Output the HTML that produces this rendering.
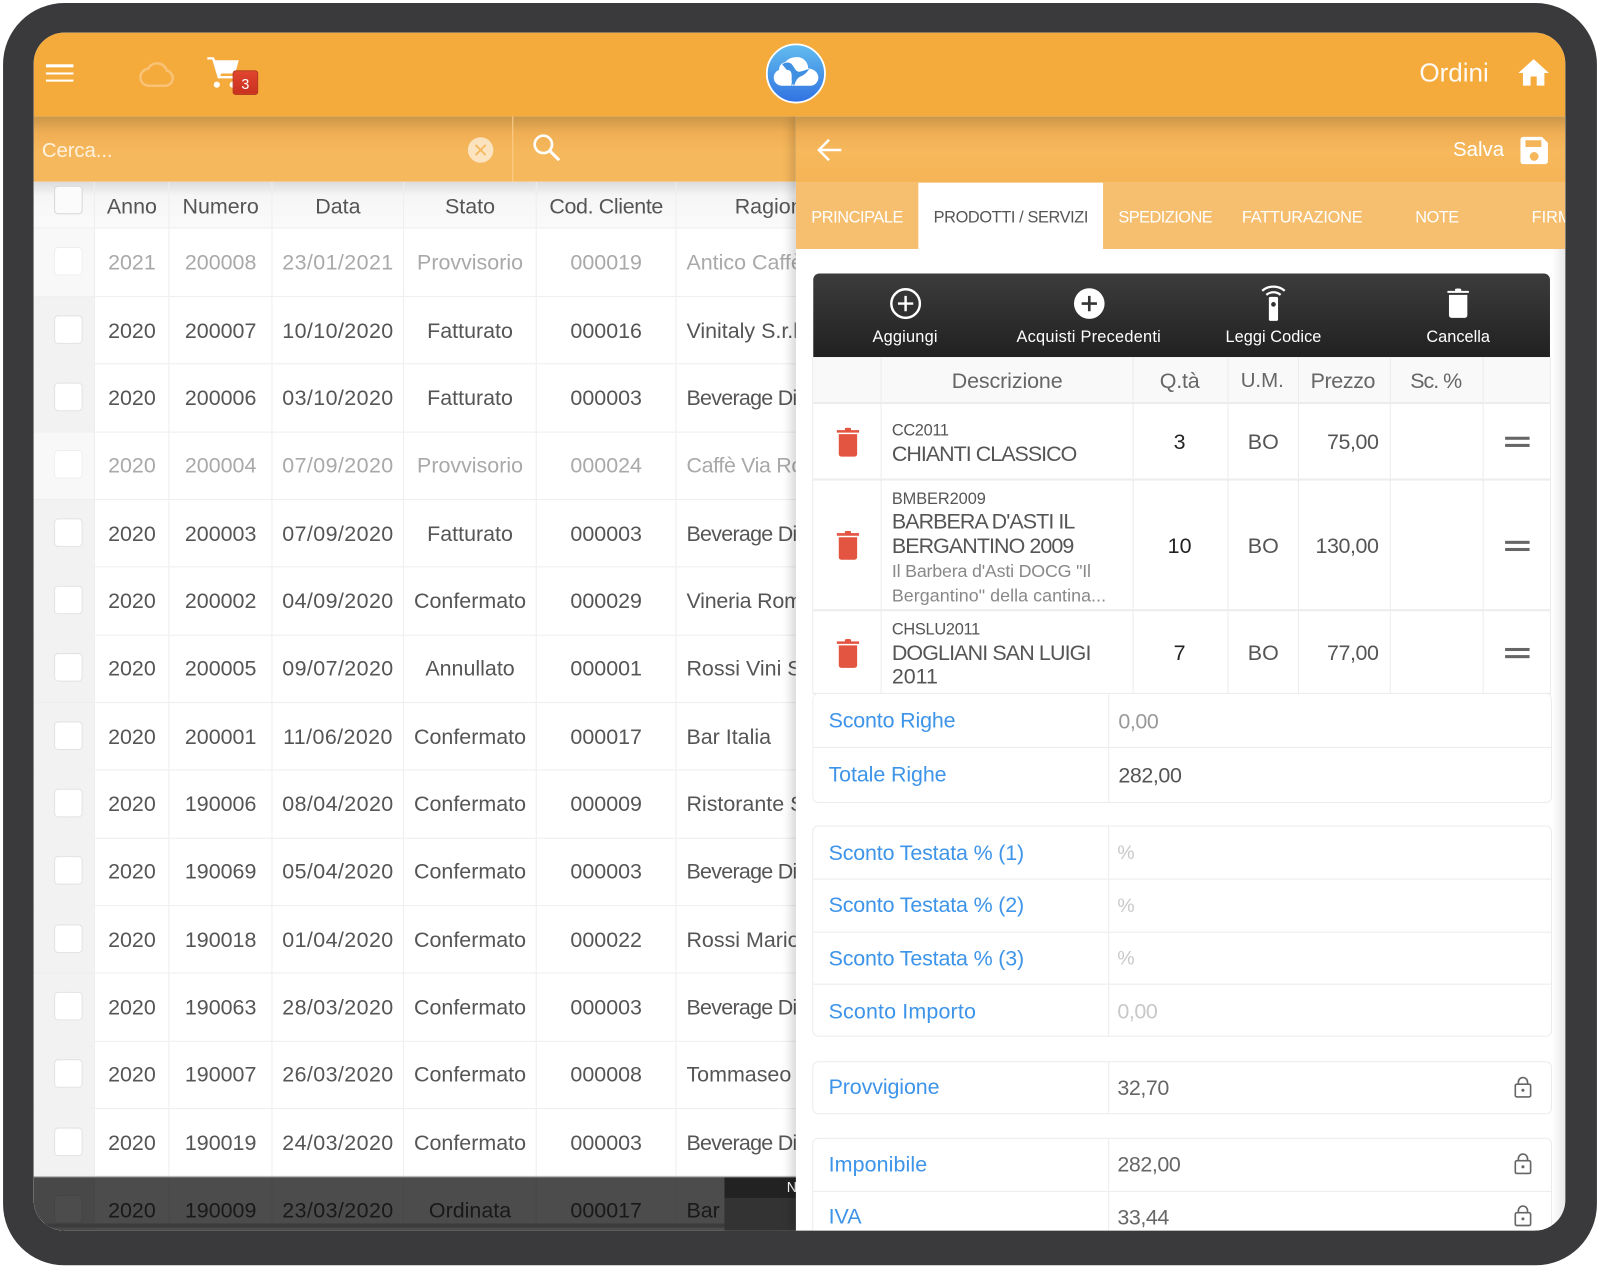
<!DOCTYPE html>
<html lang="it">
<head>
<meta charset="utf-8">
<title>Ordini</title>
<style>
html,body{margin:0;padding:0;width:1600px;height:1268px;overflow:hidden;background:#fff}
*{box-sizing:border-box}
#root{position:absolute;left:0;top:0;width:1568px;height:1243px;transform:scale(1.0204);transform-origin:0 0;font-family:"Liberation Sans",sans-serif;color:#555}
#frame{position:absolute;left:3px;top:3px;width:1562px;height:1236.5px;background:#3a3a3c;border-radius:60px}
#screen{position:absolute;left:33px;top:32px;width:1500.5px;height:1173.5px;border-radius:30px;overflow:hidden;background:#fff}
.a{position:absolute}
.t{position:absolute;white-space:nowrap}
svg{position:absolute;display:block}
#top{left:0;top:0;width:1501px;height:82px;background:#f5aa3c;z-index:5}
#search{left:0;top:82px;width:747px;height:64px;background:linear-gradient(#c99649 0,#f0ae54 16px,#f6b85c 34px,#f6b85c 100%)}
#left{left:0;top:146px;width:747px;height:1028px;overflow:hidden;background:#fff}
.r{display:flex;height:66.35px;border-bottom:1px solid #eee;font-size:21px;color:#555}
.r>div{display:flex;align-items:center;justify-content:center;border-right:1px solid #eee;white-space:nowrap;overflow:hidden;padding-top:2px}
.r>div:nth-child(1){width:60.3px;background:#f2f2f2;position:relative;padding:0 0 2px 8px}
.r>div:nth-child(2){width:73px}
.r>div:nth-child(3){width:101px}
.r>div:nth-child(4){width:129px;letter-spacing:.4px}
.r>div:nth-child(5){width:130px}
.r>div:nth-child(6){width:137px}
.r>div:nth-child(7){width:117px;justify-content:flex-start;padding-left:9.7px;border-right:0}
.r i{display:block;width:28px;height:28px;background:#fff;border:1px solid #e3e3e3;border-radius:4px}
.g{color:#a9a9a9}
.g>div:nth-child(1){background:#f8f8f8}
.g i{border-color:#efefef}
.h{height:46px;background:linear-gradient(#dcdcdc 0,#f6f6f6 14px,#fafafa 100%);color:#555}
.h>div{letter-spacing:0!important;padding-top:4px}
.h>div:nth-child(1){background:transparent}
.h i{position:absolute;left:20px;top:4px;background:#fbfbfb;border-color:#d8d8d8}
.bv{letter-spacing:-.7px}
.cv{letter-spacing:-.35px}
.vr{letter-spacing:-.2px}
#dim{left:0;top:1121px;width:747px;height:53px;background:rgba(0,0,0,.7);border-top:1px solid #888}
#panel{left:747px;top:82px;width:753.5px;height:1092px;background:#fff;box-shadow:-4px 0 10px rgba(0,0,0,.18);overflow:hidden}
#phead{left:0;top:0;width:754px;height:65px;background:linear-gradient(#c99649 0,#f0ae54 16px,#f6b85c 34px,#f5b456 100%)}
#tabs{left:0;top:65px;width:754px;height:65px;background:#f6bf6f;font-size:16px;color:#fff}
#act{left:120px;top:0;width:181px;height:65px;background:#fff}
#bar{left:17px;top:154px;width:722px;height:82px;border-radius:6px 6px 0 0;background:linear-gradient(#3c3c3c,#212121);color:#fff;font-size:16px}
.lb{width:180px;text-align:center;top:54px}
.line{position:absolute;background:#ececec}
.c{position:absolute;font-size:21px;white-space:nowrap;transform:translate(-50%,-50%)}
.l{position:absolute;white-space:nowrap;transform:translateY(-50%);left:94px}
.box{position:absolute;left:16px;width:725px;border:1px solid #ececec;border-radius:6px;overflow:hidden;background:#fff}
.rw{position:absolute;left:0;width:100%;height:52px;border-bottom:1px solid #ececec;font-size:21px}
.rw b{position:absolute;left:15px;top:13px;font-weight:400;color:#3d94e8;white-space:nowrap}
.rw span{position:absolute;left:298px;top:14px;color:#666;white-space:nowrap;letter-spacing:-.4px}
.rw em{position:absolute;left:289px;top:0;width:1px;height:100%;background:#ececec}
</style>
</head>
<body>
<div id="root">
<div id="frame"></div>
<div id="screen">

<div id="top" class="a">
  <div class="a" style="left:12px;top:31px;width:27px;height:2.6px;background:#fff"></div>
  <div class="a" style="left:12px;top:38.5px;width:27px;height:2.6px;background:#fff"></div>
  <div class="a" style="left:12px;top:45.5px;width:27px;height:2.6px;background:#fff"></div>
  <svg style="left:103px;top:27px" width="36" height="27" viewBox="0 0 36 27"><path d="M9 25h17a7.500 7.500 0 0 0 1.500-14.800A10 10 0 0 0 9 8.500 8.300 8.300 0 0 0 9 25z" fill="none" stroke="#fff" stroke-opacity=".3" stroke-width="2.400"/></svg>
  <svg style="left:170px;top:24px" width="32" height="31" viewBox="0 0 32 31"><path d="M0 0h6.500l1.500 3h23l-3.500 13H11.500l.8 2.500H27v2.300H10.500L5 2.300H0z" fill="#fff"/><path d="M10.500 15.500h3v2.500h-3z" fill="#fff"/><circle cx="9.500" cy="27" r="3" fill="#fff"/><circle cx="25" cy="27" r="3" fill="#fff"/></svg>
  <div class="a" style="left:195px;top:37px;width:25px;height:24px;background:linear-gradient(#e0452f,#c9301f);border:1px solid #b22c1c;border-radius:3px;color:#fff;font-size:14px;line-height:25px;text-align:center">3</div>
  <svg style="left:717px;top:10px" width="60" height="60" viewBox="0 0 60 60"><defs><linearGradient id="lg" x1="0" y1="0" x2="0" y2="1"><stop offset="0" stop-color="#62bdee"/><stop offset="1" stop-color="#3172e2"/></linearGradient></defs><circle cx="30" cy="30" r="28.500" fill="url(#lg)" stroke="#fff" stroke-width="1.800"/><path d="M16 42a8 8 0 0 1-2.500-15.500 7 7 0 0 1 6-7.500C22 15.500 27 13.500 32 14c6 .5 10 5.500 10 11 6 .5 10 4.500 10 9a8 8 0 0 1-8 8z" fill="#fff"/><path d="M16.500 21c3-2 6.500-2.500 9-.5 2.500 2.500 3 5.500 6 7.500 3 1 6-1 11.500-2.500-2 3.500-5 6-8.500 7.500-2.500 1.200-4 3-5.500 7l-1 2.500-.8-2.500-1.700 2.500.5-4.500c-.5-3 .3-5.500-.5-8.500-.7-2.300-2.500-3-4.500-3z" fill="#3f8fe2"/></svg>
  <div class="t" style="left:1358px;top:26px;font-size:25.500px;color:#fff;font-weight:400;opacity:.95">Ordini</div>
  <svg style="left:1455px;top:26px" width="30" height="26" viewBox="0 0 30 26"><path d="M15 0 0 13.500h4.500V26h7.500v-9h6v9h7.500V13.500H30z" fill="#fff"/></svg>
</div>

<div id="left" class="a">
  <div class="r h"><div><i></i></div><div>Anno</div><div>Numero</div><div>Data</div><div>Stato</div><div style="letter-spacing:-.35px!important">Cod. Cliente</div><div style="padding-left:57px">Ragione Sociale</div></div>
  <div class="r g" style="height:67px"><div><i></i></div><div>2021</div><div>200008</div><div>23/01/2021</div><div>Provvisorio</div><div>000019</div><div>Antico Caffè</div></div>
  <div class="r"><div><i></i></div><div>2020</div><div>200007</div><div>10/10/2020</div><div>Fatturato</div><div>000016</div><div>Vinitaly S.r.l.</div></div>
  <div class="r"><div><i></i></div><div>2020</div><div>200006</div><div>03/10/2020</div><div>Fatturato</div><div>000003</div><div class="bv">Beverage Di</div></div>
  <div class="r g"><div><i></i></div><div>2020</div><div>200004</div><div>07/09/2020</div><div>Provvisorio</div><div>000024</div><div class="cv">Caffè Via Ro</div></div>
  <div class="r"><div><i></i></div><div>2020</div><div>200003</div><div>07/09/2020</div><div>Fatturato</div><div>000003</div><div class="bv">Beverage Di</div></div>
  <div class="r"><div><i></i></div><div>2020</div><div>200002</div><div>04/09/2020</div><div>Confermato</div><div>000029</div><div class="vr">Vineria Rom</div></div>
  <div class="r"><div><i></i></div><div>2020</div><div>200005</div><div>09/07/2020</div><div>Annullato</div><div>000001</div><div>Rossi Vini S</div></div>
  <div class="r"><div><i></i></div><div>2020</div><div>200001</div><div>11/06/2020</div><div>Confermato</div><div>000017</div><div>Bar Italia</div></div>
  <div class="r"><div><i></i></div><div>2020</div><div>190006</div><div>08/04/2020</div><div>Confermato</div><div>000009</div><div>Ristorante S</div></div>
  <div class="r"><div><i></i></div><div>2020</div><div>190069</div><div>05/04/2020</div><div>Confermato</div><div>000003</div><div class="bv">Beverage Di</div></div>
  <div class="r"><div><i></i></div><div>2020</div><div>190018</div><div>01/04/2020</div><div>Confermato</div><div>000022</div><div>Rossi Mario</div></div>
  <div class="r"><div><i></i></div><div>2020</div><div>190063</div><div>28/03/2020</div><div>Confermato</div><div>000003</div><div class="bv">Beverage Di</div></div>
  <div class="r"><div><i></i></div><div>2020</div><div>190007</div><div>26/03/2020</div><div>Confermato</div><div>000008</div><div>Tommaseo</div></div>
  <div class="r"><div><i></i></div><div>2020</div><div>190019</div><div>24/03/2020</div><div>Confermato</div><div>000003</div><div class="bv">Beverage Di</div></div>
  <div class="r"><div><i></i></div><div>2020</div><div>190009</div><div>23/03/2020</div><div>Ordinata</div><div>000017</div><div>Bar</div></div>
</div>

<div id="search" class="a">
  <div class="t" style="left:8px;top:23px;font-size:20px;color:#fff;opacity:.8;letter-spacing:-.1px">Cerca...</div>
  <svg style="left:425px;top:20px" width="26" height="26" viewBox="0 0 26 26"><circle cx="13" cy="13" r="12.500" fill="#fff" fill-opacity=".62"/><path d="M8 8l10 10M18 8 8 18" stroke="#f6b85c" stroke-width="1.800"/></svg>
  <div class="a" style="left:469px;top:0;width:1px;height:64px;background:#fbd091"></div>
  <svg style="left:489px;top:17px" width="28" height="28" viewBox="0 0 28 28"><circle cx="10.500" cy="10.500" r="8.500" fill="none" stroke="#fff" stroke-width="2.600"/><path d="M16.500 16.500 26 26" stroke="#fff" stroke-width="3"/></svg>
</div>

<div id="dim" class="a">
  <div class="a" style="left:0;top:45px;width:677px;height:4px;background:#3c3c3c"></div>
  <div class="a" style="left:677px;top:0;width:70px;height:20px;background:#222;color:#fff;font-size:14px;line-height:18px;padding-left:61px">N</div>
  <div class="a" style="left:677px;top:20px;width:70px;height:33px;background:#333"></div>
</div>

<div id="panel" class="a">
  <div id="phead" class="a">
    <svg style="left:20px;top:20px" width="26" height="26" viewBox="0 0 26 26"><path d="M24.500 13H3M12.500 3 2.500 13l10 10" fill="none" stroke="#fff" stroke-width="2.400"/></svg>
    <div class="t" style="left:644px;top:22px;font-size:20px;color:#fff">Salva</div>
    <svg style="left:710px;top:20px" width="27" height="27" viewBox="0 0 27 27"><path d="M3 0h18l6 6v18a3 3 0 0 1-3 3H3a3 3 0 0 1-3-3V3a3 3 0 0 1 3-3zM5 3.500v6.500h15.500V3.500zM13.500 15a4.300 4.300 0 1 0 0 8.600 4.300 4.300 0 0 0 0-8.600z" fill="#fff" fill-rule="evenodd"/></svg>
  </div>
  <div id="tabs" class="a">
    <div id="act" class="a"></div>
    <div class="t" style="left:15px;top:26px;letter-spacing:-.4px">PRINCIPALE</div>
    <div class="t" style="left:135px;top:26px;color:#555;letter-spacing:-.37px">PRODOTTI / SERVIZI</div>
    <div class="t" style="left:316px;top:26px;letter-spacing:-.5px">SPEDIZIONE</div>
    <div class="t" style="left:437px;top:26px;letter-spacing:-.2px">FATTURAZIONE</div>
    <div class="t" style="left:607px;top:26px;letter-spacing:-.5px">NOTE</div>
    <div class="t" style="left:721px;top:26px">FIRMA</div>
  </div>

  <div id="bar" class="a">
    <svg style="left:75px;top:14px" width="31" height="31" viewBox="0 0 31 31"><circle cx="15.500" cy="15.500" r="14" fill="none" stroke="#fff" stroke-width="2.400"/><path d="M15.500 8v15M8 15.500h15" stroke="#fff" stroke-width="2.400"/></svg>
    <svg style="left:255px;top:14px" width="31" height="31" viewBox="0 0 31 31"><circle cx="15.500" cy="15.500" r="15" fill="#fff"/><path d="M15.500 8v15M8 15.500h15" stroke="#333" stroke-width="2.600"/></svg>
    <svg style="left:439px;top:11px" width="24" height="36" viewBox="0 0 24 36"><path d="M1 6C7 .5 17 .5 23 6M5 10c4-3.500 10-3.500 14 0" fill="none" stroke="#fff" stroke-width="2.200"/><path d="M7.500 13.500a1.500 1.500 0 0 1 1.500-1.500h6a1.500 1.500 0 0 1 1.500 1.500V34a1.500 1.500 0 0 1-1.500 1.500H9A1.500 1.500 0 0 1 7.500 34zM12 17a2.300 2.300 0 1 0 0 4.600 2.300 2.300 0 0 0 0-4.600z" fill="#fff" fill-rule="evenodd"/></svg>
    <svg style="left:621px;top:14px" width="22" height="30" viewBox="0 0 22 30"><path d="M8 1.500C8 .5 14 .5 14 1.500V3h7.500v2H.5V3H8z" fill="#fff"/><path d="M2 7h18v20a2.500 2.500 0 0 1-2.500 2.500h-13A2.500 2.500 0 0 1 2 27z" fill="#fff"/></svg>
    <div class="t lb" style="left:0;letter-spacing:.2px">Aggiungi</div>
    <div class="t lb" style="left:180px;letter-spacing:.25px">Acquisti Precedenti</div>
    <div class="t lb" style="left:361px;letter-spacing:.05px">Leggi Codice</div>
    <div class="t lb" style="left:542px">Cancella</div>
  </div>

  <!-- products table -->
  <div class="a" style="left:17px;top:236px;width:722px;height:45px;background:#f9f9f9"></div>
  <div class="line" style="left:17px;top:280px;width:723px;height:2px"></div>
  <div class="line" style="left:17px;top:355px;width:723px;height:2px"></div>
  <div class="line" style="left:17px;top:483px;width:723px;height:2px"></div>
  <div class="line" style="left:17px;top:565px;width:723px;height:2px"></div>
  <div class="line" style="left:16px;top:236px;width:1px;height:330px"></div>
  <div class="line" style="left:83px;top:236px;width:1px;height:330px"></div>
  <div class="line" style="left:330px;top:236px;width:1px;height:330px"></div>
  <div class="line" style="left:423px;top:236px;width:1px;height:330px"></div>
  <div class="line" style="left:492px;top:236px;width:1px;height:330px"></div>
  <div class="line" style="left:582px;top:236px;width:1px;height:330px"></div>
  <div class="line" style="left:673px;top:236px;width:1px;height:330px"></div>
  <div class="line" style="left:739px;top:236px;width:1px;height:330px"></div>

  <div class="c" style="left:207px;top:260px;color:#666;letter-spacing:-.1px">Descrizione</div>
  <div class="c" style="left:376px;top:260px;color:#666;letter-spacing:-.2px">Q.tà</div>
  <div class="c" style="left:457px;top:260px;color:#666;font-size:20px">U.M.</div>
  <div class="c" style="left:536px;top:260px;color:#666;letter-spacing:-.35px">Prezzo</div>
  <div class="c" style="left:627px;top:260px;color:#666;letter-spacing:-1px">Sc. %</div>

  <div class="l" style="top:309px;font-size:16px;letter-spacing:-.3px">CC2011</div>
  <div class="l" style="top:332px;font-size:21px;letter-spacing:-.95px">CHIANTI CLASSICO</div>
  <div class="l" style="top:376px;font-size:16px;letter-spacing:-.05px">BMBER2009</div>
  <div class="l" style="top:398px;font-size:21px;letter-spacing:-.9px">BARBERA D'ASTI IL</div>
  <div class="l" style="top:422px;font-size:21px;letter-spacing:-.9px">BERGANTINO 2009</div>
  <div class="l" style="top:446px;font-size:17.500px;color:#888;letter-spacing:-.2px">Il Barbera d'Asti DOCG "Il</div>
  <div class="l" style="top:470px;font-size:17.500px;color:#888;letter-spacing:.05px">Bergantino" della cantina...</div>
  <div class="l" style="top:504px;font-size:16px;letter-spacing:-.25px">CHSLU2011</div>
  <div class="l" style="top:527px;font-size:21px;letter-spacing:-.85px">DOGLIANI SAN LUIGI</div>
  <div class="l" style="top:550px;font-size:21px">2011</div>

  <div class="c" style="left:376px;top:320px;color:#222">3</div>
  <div class="c" style="left:376px;top:422px;color:#222">10</div>
  <div class="c" style="left:376px;top:527px;color:#222">7</div>
  <div class="c" style="left:458px;top:320px">BO</div>
  <div class="c" style="left:458px;top:422px">BO</div>
  <div class="c" style="left:458px;top:527px">BO</div>
  <div class="c" style="top:320px;transform:translateY(-50%);right:182.500px;letter-spacing:-.4px">75,00</div>
  <div class="c" style="top:422px;transform:translateY(-50%);right:182.500px;letter-spacing:-.4px">130,00</div>
  <div class="c" style="top:527px;transform:translateY(-50%);right:182.500px;letter-spacing:-.4px">77,00</div>

  <svg style="left:40px;top:305px" width="22" height="29" viewBox="0 0 22 29"><path d="M8 1C8 0 14 0 14 1v1.500h8V5H0V2.500h8z" fill="#e35441"/><path d="M2 6.500h18V26a2.500 2.500 0 0 1-2.500 2.500h-13A2.500 2.500 0 0 1 2 26z" fill="#e35441"/></svg>
  <svg style="left:40px;top:406px" width="22" height="29" viewBox="0 0 22 29"><path d="M8 1C8 0 14 0 14 1v1.500h8V5H0V2.500h8z" fill="#e35441"/><path d="M2 6.500h18V26a2.500 2.500 0 0 1-2.500 2.500h-13A2.500 2.500 0 0 1 2 26z" fill="#e35441"/></svg>
  <svg style="left:40px;top:512px" width="22" height="29" viewBox="0 0 22 29"><path d="M8 1C8 0 14 0 14 1v1.500h8V5H0V2.500h8z" fill="#e35441"/><path d="M2 6.500h18V26a2.500 2.500 0 0 1-2.500 2.500h-13A2.500 2.500 0 0 1 2 26z" fill="#e35441"/></svg>
  <div class="a" style="left:695px;top:314px;width:24px;height:2.500px;background:#666"></div>
  <div class="a" style="left:695px;top:321px;width:24px;height:2.500px;background:#666"></div>
  <div class="a" style="left:695px;top:416px;width:24px;height:2.500px;background:#666"></div>
  <div class="a" style="left:695px;top:423px;width:24px;height:2.500px;background:#666"></div>
  <div class="a" style="left:695px;top:521px;width:24px;height:2.500px;background:#666"></div>
  <div class="a" style="left:695px;top:528px;width:24px;height:2.500px;background:#666"></div>

  <!-- form blocks -->
  <div class="box" style="top:566px;height:107px;border-top:0">
    <div class="rw" style="top:0;height:53px"><b style="top:15px;letter-spacing:-.15px">Sconto Righe</b><em></em><span style="color:#999;top:16px;left:299px">0,00</span></div>
    <div class="rw" style="top:53px;height:53px;border:0"><b style="top:15px;letter-spacing:-.1px">Totale Righe</b><em></em><span style="top:16px;left:299px;color:#555">282,00</span></div>
  </div>
  <div class="box" style="top:695px;height:207px">
    <div class="rw" style="top:0"><b style="top:15px;letter-spacing:-.15px">Sconto Testata % (1)</b><em></em><span style="color:#c8c8c8;font-size:19px;top:16px">%</span></div>
    <div class="rw" style="top:52px"><b style="top:14px;letter-spacing:-.15px">Sconto Testata % (2)</b><em></em><span style="color:#c8c8c8;font-size:19px;top:16px">%</span></div>
    <div class="rw" style="top:103px"><b style="top:15px;letter-spacing:-.15px">Sconto Testata % (3)</b><em></em><span style="color:#c8c8c8;font-size:19px;top:16px">%</span></div>
    <div class="rw" style="top:155px;border:0"><b style="top:15px;letter-spacing:.15px">Sconto Importo</b><em></em><span style="color:#c8c8c8;top:15px">0,00</span></div>
  </div>
  <div class="box" style="top:926px;height:52px">
    <div class="rw" style="top:0;border:0"><b style="letter-spacing:-.1px">Provvigione</b><em></em><span>32,70</span></div>
  </div>
  <div class="box" style="top:1001px;height:120px">
    <div class="rw" style="top:0"><b style="top:14px;letter-spacing:.1px">Imponibile</b><em></em><span>282,00</span></div>
    <div class="rw" style="top:52px;border:0"><b style="top:13px">IVA</b><em></em><span style="top:14px">33,44</span></div>
  </div>
  <svg style="left:704px;top:941px" width="18" height="21" viewBox="0 0 18 21"><rect x="1" y="7.500" width="15" height="12.500" rx="1.500" fill="none" stroke="#666" stroke-width="1.600"/><path d="M4 7.500V5.500a4.500 4.500 0 0 1 9 0v2" fill="none" stroke="#666" stroke-width="1.600"/><circle cx="8.500" cy="13.500" r="1.500" fill="#666"/></svg>
  <svg style="left:704px;top:1016px" width="18" height="21" viewBox="0 0 18 21"><rect x="1" y="7.500" width="15" height="12.500" rx="1.500" fill="none" stroke="#666" stroke-width="1.600"/><path d="M4 7.500V5.500a4.500 4.500 0 0 1 9 0v2" fill="none" stroke="#666" stroke-width="1.600"/><circle cx="8.500" cy="13.500" r="1.500" fill="#666"/></svg>
  <svg style="left:704px;top:1067px" width="18" height="21" viewBox="0 0 18 21"><rect x="1" y="7.500" width="15" height="12.500" rx="1.500" fill="none" stroke="#666" stroke-width="1.600"/><path d="M4 7.500V5.500a4.500 4.500 0 0 1 9 0v2" fill="none" stroke="#666" stroke-width="1.600"/><circle cx="8.500" cy="13.500" r="1.500" fill="#666"/></svg>

  <div class="a" style="left:741px;top:130px;width:13px;height:962px;background:linear-gradient(90deg,rgba(0,0,0,0),rgba(0,0,0,.09))"></div>
</div>

</div>
</div>
</body>
</html>
